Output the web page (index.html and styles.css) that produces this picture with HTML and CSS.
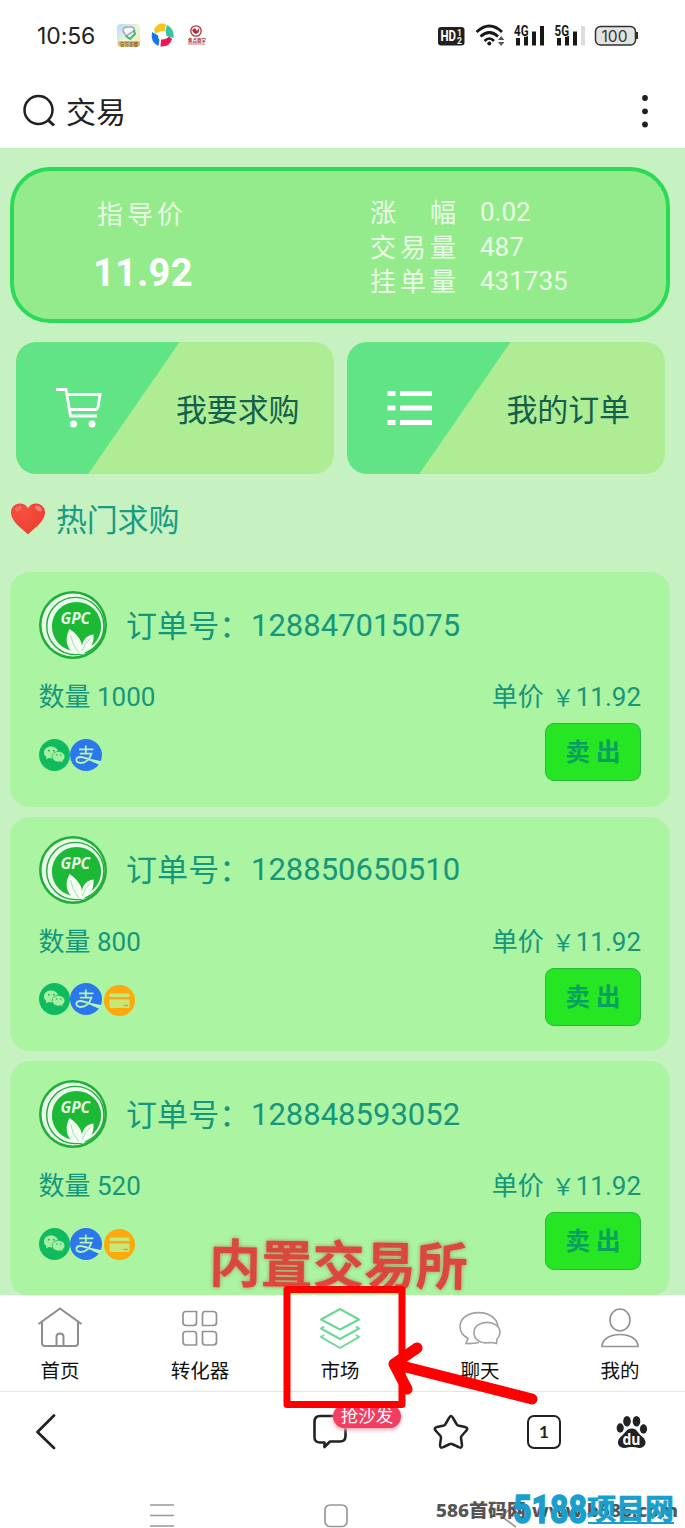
FILE: index.html
```html
<!DOCTYPE html>
<html lang="zh-CN">
<head>
<meta charset="utf-8">
<title>交易</title>
<link rel="stylesheet" href="styles.css">
</head>
<body>
<svg class="defs" width="0" height="0">
  <symbol id="gpc" viewBox="0 0 68 68">
    <circle cx="34" cy="34" r="34" fill="#1fae38"/>
    <circle cx="34" cy="34" r="31.500" fill="#e9fbe9"/>
    <circle cx="36.300" cy="35" r="28.600" fill="none" stroke="#1fae38" stroke-width="1.400"/>
    <circle cx="37.500" cy="35.500" r="24.600" fill="#1cb936"/>
    <text x="21.500" y="32.500" class="gpc-text" textLength="29.500" lengthAdjust="spacingAndGlyphs">GPC</text>
    <path d="M30.500 38C38 43 45 51 42.500 59C43 49 47 44.500 54.500 43.500C55 51 53 57 47 60L45 63H36C26 57 26 46 30.500 38Z" fill="#f2fff2"/>
    <path d="M31.500 44Q33 54 40 62M51.500 47Q46 52 43 60" stroke="#7fd389" stroke-width=".7" fill="none"/>
  </symbol>
  <symbol id="wechat" viewBox="0 0 31 32">
    <ellipse cx="15.500" cy="16" rx="15.500" ry="16" fill="#10ba5f"/>
    <path d="M12 7.500c-4 0-7 2.500-7 6 0 2 1 3.500 2.500 4.600l-.8 2.400 3-1.400c1 .3 1.700.3 2.600.3 4 0 7-2.600 7-5.900S16 7.500 12 7.500z" fill="#a8eea0"/>
    <path d="M19.500 12.400c-3.600 0-6.300 2.300-6.300 5.300s2.700 5.300 6.300 5.300c.8 0 1.500-.1 2.100-.3l2.500 1.300-.5-2.200c1.500-1 2.300-2.400 2.300-4.100 0-3-2.800-5.300-6.400-5.300z" fill="#a8eea0" stroke="#10ba5f" stroke-width=".8"/>
    <g fill="#10ba5f"><circle cx="9.800" cy="11.700" r=".9"/><circle cx="14.800" cy="11.700" r=".9"/><circle cx="17.600" cy="16" r=".8"/><circle cx="21.700" cy="16" r=".8"/></g>
  </symbol>
  <symbol id="alipay" viewBox="0 0 32 32">
    <circle cx="16" cy="16" r="16" fill="#2a77ee"/>
    <path d="M9 10.300H23.500M15.800 6.500V14.500M9.800 14.600H21.500Q18.500 24 10.500 24C5 24 5 18 10.500 18C15.500 18 21 22 30 24.500" fill="none" stroke="#b9f4b7" stroke-width="1.800"/>
    <path d="M19 19.500L31.700 22.300L30 26L23 23Z" fill="#b9f4b7"/>
  </symbol>
  <symbol id="bank" viewBox="0 0 31 31">
    <circle cx="15.500" cy="15.500" r="15.500" fill="#fba90d"/>
    <path d="M6.500 8.500h18q1 0 1 1v2.500h-20V9.500q0-1 1-1zM5.500 14.500h20v7.500q0 1-1 1h-18q-1 0-1-1z" fill="#c6e77a"/>
    <path d="M19.500 20.500h4.500" stroke="#e5a22b" stroke-width="1.500"/>
  </symbol>
</svg>
<div class="phone">
  <header class="status">
    <span class="clock">10:56</span>
    <svg class="app-icons" width="94" height="28" viewBox="0 0 94 28">
      <defs><linearGradient id="app" x2="1" y2="1"><stop stop-color="#a9dcfb"/><stop offset=".5" stop-color="#e7f8d6"/><stop offset="1" stop-color="#ffe8a2"/></linearGradient></defs>
      <rect x="1" y="2" width="23" height="22" rx="4" fill="url(#app)"/>
      <path d="M10 14l-3-5q0-4 4-4h5q3 1 2 4z" fill="#e8fff4" stroke="#c395ca" stroke-width="1.500"/>
      <path d="M10 14l4 3 5-5-1-4" fill="none" stroke="#29bd8e" stroke-width="2"/>
      <rect x="2" y="19" width="22" height="5.500" rx="2" fill="#dfb573"/>
      <text x="4" y="23.600" class="app-tiny brown">官方正版</text>
      <path d="M38 7Q43-1 50 2.500L48.500 9.500Q44 8 39.500 12Z" fill="#f5c51b"/>
      <path d="M51 3Q59 7 57.500 16L50.500 14Q50 10 49.500 9Z" fill="#32c5a6"/>
      <path d="M56 17Q54 25 44.500 24.500L45 17.500Q50 18 53 14.500Z" fill="#ef164e"/>
      <path d="M36 10L42 13.500Q42 17 43.500 18L42.500 24Q34 20 36 10Z" fill="#1677ec"/>
      <circle cx="80" cy="9" r="5.200" fill="none" stroke="#b32d36" stroke-width="1.300"/>
      <path d="M76 8l3-2 2 3 2-3q1 5-3 6-3-1-4-4z" fill="#b32d36"/>
      <text x="72" y="19.500" class="app-tiny red">焦点商学</text>
      <path d="M72 22h17" stroke="#d27579" stroke-width="1"/>
    </svg>
    <svg class="signals" width="202" height="24" viewBox="-2 0 202 24">
      <rect x="-1" y="3" width="26.500" height="18.500" rx="3" fill="#202020"/>
      <text x="1.500" y="17.200" class="hd" textLength="15.500" lengthAdjust="spacingAndGlyphs">HD</text>
      <text x="18" y="11.500" class="hd-sub">1</text><text x="18" y="19.500" class="hd-sub">2</text>
      <g fill="none" stroke="#181818" stroke-width="2.700"><path d="M37.500 8Q50.500-4 63 8M41.500 12.500Q50.500 4.500 59 12.500M45.500 17Q50.500 12 55 17"/></g>
      <circle cx="50.300" cy="19.500" r="2" fill="#181818"/>
      <path d="M59 16l3.200-4 3.200 4zM59 18l3.200 4 3.200-4z" fill="#555"/>
      <g fill="#181818"><path d="M77 14h4v7.500h-4zM85 12h4v9.500h-4zM93 7.500h4v14h-4zM101 2h4v19.500h-4zM118 14h4v7.500h-4zM126 12h4v9.500h-4zM134 7.500h4v14h-4z"/></g>
      <path d="M142 2h4v19.500h-4z" fill="#ddd"/>
      <text x="75" y="11.500" class="net" textLength="14.500" lengthAdjust="spacingAndGlyphs">4G</text>
      <text x="115.500" y="11.500" class="net" textLength="14.500" lengthAdjust="spacingAndGlyphs">5G</text>
      <rect x="156.500" y="2.500" width="40" height="18.500" rx="5" fill="#e3e3e3" stroke="#303030" stroke-width="1.500"/>
      <path d="M198 8v7" stroke="#303030" stroke-width="2"/>
      <text x="162.500" y="17.500" class="batt" textLength="26" lengthAdjust="spacingAndGlyphs">100</text>
    </svg>
  </header>
  <div class="topbar">
    <svg width="34" height="34" viewBox="0 0 34 34" fill="none" stroke="#202020"><circle cx="16.500" cy="16" r="14" stroke-width="2.500"/><path d="M26 26l6 5.500" stroke-width="3"/></svg>
    <h1>交易</h1>
    <svg class="more" width="8" height="34" viewBox="0 0 8 34" fill="#202020"><circle cx="4" cy="4" r="2.900"/><circle cx="4" cy="17.300" r="2.900"/><circle cx="4" cy="30.500" r="2.900"/></svg>
  </div>

  <main class="market">
    <section class="price">
      <div class="guide"><span class="guide-label">指导价</span><strong>11.92</strong></div>
      <dl class="stats">
        <dt>涨　幅</dt><dd>0.02</dd>
        <dt>交易量</dt><dd>487</dd>
        <dt>挂单量</dt><dd>431735</dd>
      </dl>
    </section>
    <nav class="actions">
      <a class="action">
        <svg width="48" height="42" viewBox="0 0 48 42"><path d="M1 2.500H11L15.500 29H42M12 7.500H45L43 20Q42.500 22.500 40 22.500H14.500" fill="none" stroke="#fff" stroke-width="2.800"/><circle cx="18.500" cy="37" r="3.500" fill="#fff"/><circle cx="37" cy="37" r="3.500" fill="#fff"/></svg>
        <span>我要求购</span>
      </a>
      <a class="action">
        <svg width="48" height="42" viewBox="0 0 48 42" fill="#fff"><path d="M1.500 4h8v5h-8zM14 4h32v5H14zM1.500 18.500h8v5h-8zM14 18.500h32v5H14zM1.500 33h8v5h-8zM14 33h32v5H14z"/></svg>
        <span>我的订单</span>
      </a>
    </nav>
    <h2 class="hot">
      <svg width="36" height="34" viewBox="0 0 36 34"><defs><radialGradient id="heart" cx=".35" cy=".3" r=".8"><stop stop-color="#f6503e"/><stop offset=".8" stop-color="#ef4132"/><stop offset="1" stop-color="#c9382d"/></radialGradient></defs><path d="M18 32.500C14 28 1 20 1 10.500C1 1 13-2 18 6C23-2 35 1 35 10.500C35 20 22 28 18 32.500Z" fill="url(#heart)"/><ellipse cx="28.500" cy="6.500" rx="3.800" ry="2.200" fill="#f28079" transform="rotate(35 28.500 6.500)"/><ellipse cx="8.500" cy="6.500" rx="3.800" ry="2" fill="#f06a60" transform="rotate(-35 8.500 6.500)"/></svg>
      <span>热门求购</span>
    </h2>
    <div class="orders">
      <article class="order">
        <div class="order-head"><svg class="logo"><use href="#gpc"/></svg><span class="order-label">订单号：</span><span>128847015075</span></div>
        <div class="order-info"><span>数量 1000</span><span class="unit">单价<i>￥</i>11.92</span></div>
        <div class="order-foot"><div class="pays"><svg class="pay-wechat"><use href="#wechat"/></svg><svg class="pay-ali"><use href="#alipay"/></svg></div><button class="sell">卖 出</button></div>
      </article>
      <article class="order">
        <div class="order-head"><svg class="logo"><use href="#gpc"/></svg><span class="order-label">订单号：</span><span>128850650510</span></div>
        <div class="order-info"><span>数量 800</span><span class="unit">单价<i>￥</i>11.92</span></div>
        <div class="order-foot"><div class="pays"><svg class="pay-wechat"><use href="#wechat"/></svg><svg class="pay-ali"><use href="#alipay"/></svg><svg class="pay-bank"><use href="#bank"/></svg></div><button class="sell">卖 出</button></div>
      </article>
      <article class="order">
        <div class="order-head"><svg class="logo"><use href="#gpc"/></svg><span class="order-label">订单号：</span><span>128848593052</span></div>
        <div class="order-info"><span>数量 520</span><span class="unit">单价<i>￥</i>11.92</span></div>
        <div class="order-foot"><div class="pays"><svg class="pay-wechat"><use href="#wechat"/></svg><svg class="pay-ali"><use href="#alipay"/></svg><svg class="pay-bank"><use href="#bank"/></svg></div><button class="sell">卖 出</button></div>
      </article>
    </div>
  </main>

  <nav class="tabs">
    <a><svg width="46" height="44" viewBox="0 0 46 44" fill="none" stroke="#8d8d8d" stroke-width="2"><path d="M1.500 18L23 2.500L44.500 18M5 16V37Q5 40 8 40H38Q41 40 41 37V16M19.500 40V31Q19.500 27.500 23 27.500Q26.500 27.500 26.500 31V40"/></svg><span>首页</span></a>
    <a><svg width="46" height="44" viewBox="0 0 46 44" fill="none" stroke="#929292" stroke-width="1.700"><path d="M9 5.500H19.500V16.500Q19.500 19.500 16.500 19.500H9Q6 19.500 6 16.500V8.500Q6 5.500 9 5.500ZM28 5.500H36Q39.500 5.500 39.500 8.500V16.500Q39.500 19.500 36 19.500H25.500V8.500Q25.500 5.500 28 5.500ZM9 25.500H16.500Q19.500 25.500 19.500 28.500V39H9Q6 39 6 36V28.500Q6 25.500 9 25.500ZM25.500 25.500H36Q39.500 25.500 39.500 28.500V36Q39.500 39 36 39H28Q25.500 39 25.500 36Z"/></svg><span>转化器</span></a>
    <a><svg width="46" height="44" viewBox="0 0 46 44" fill="none" stroke="#6bd995" stroke-width="2" stroke-linejoin="round"><path d="M23 3L42 13.500L23 23.500L4 13.500ZM7 20.500L4 22.500L23 33L42 22.500L39 20.500M7 29L4 31L23 42L42 31L39 29"/></svg><span>市场</span></a>
    <a><svg width="46" height="44" viewBox="0 0 46 44" fill="none" stroke="#a0a0a0" stroke-width="1.600"><path d="M22 36.500Q15 38 9 37.500L11 32.500Q3 28 3 20.500C3 2.500 39 1.500 41 20.500"/><path d="M40 33Q43 30 43 26.500C43 13 17 13 17 26.500C17 34 24 38 32 36.500Q36 36.500 39.500 37.500Z"/></svg><span>聊天</span></a>
    <a><svg width="46" height="44" viewBox="0 0 46 44" fill="none" stroke="#929292" stroke-width="1.600"><ellipse cx="23" cy="14" rx="10" ry="11"/><path d="M5 40.500C5 24.500 41 24.500 41 40.500Z"/></svg><span>我的</span></a>
  </nav>

  <nav class="browser">
    <svg class="b-back" viewBox="0 0 20 36" fill="none" stroke="#222" stroke-width="2.700" stroke-linecap="round" stroke-linejoin="round"><path d="M18 1.500L1.500 18L18 34"/></svg>
    <div class="comment">
      <svg width="34" height="36" viewBox="0 0 34 36" fill="none" stroke="#222" stroke-width="2.600" stroke-linejoin="round"><path d="M7 2H27Q32.500 2 32.500 8V22Q32.500 27.500 27 27.500H17L11.500 33V28.500H7Q1.500 28.500 1.500 23V8Q1.500 2 7 2Z"/></svg>
      <span class="badge">抢沙发</span>
    </div>
    <svg class="b-star" viewBox="0 0 36 36" fill="none" stroke="#222" stroke-width="2.500" stroke-linejoin="round"><path d="M16 4Q18 0 20 4L23.500 10Q24 11 25 11.500L32 13Q36 14 33 17L28.500 22Q28 23 28 24L29 31Q29 35 25.500 33L19 30Q18 29.500 17 30L10.500 33Q7 35 7 31L8 24Q8 23 7.500 22L3 17Q0 14 4 13L11 11.500Q12 11 12.500 10Z"/></svg>
    <span class="pages">1</span>
    <svg class="b-du" viewBox="0 0 32 34" fill="#222"><ellipse cx="4.200" cy="13" rx="3.600" ry="4.700"/><ellipse cx="11" cy="6.200" rx="3.800" ry="5.200"/><ellipse cx="20.500" cy="6.200" rx="3.800" ry="5.200"/><ellipse cx="27.500" cy="14" rx="3.600" ry="4.700"/><path d="M16 13.500C21 13.500 22 18.500 26 21.500C32 26 30 33 23 33Q16 31 9 33C1 33 0 26 5 21.500C9 18.500 10 13.500 16 13.500Z"/><text x="6.500" y="29.500" class="du" textLength="18" lengthAdjust="spacingAndGlyphs">du</text></svg>
  </nav>

  <nav class="system">
    <svg width="24" height="26" viewBox="0 0 24 26"><path d="M0 2h24M0 12.500h24M0 23h24" stroke="#999" stroke-width="1.700"/></svg>
    <svg width="24" height="26" viewBox="0 0 24 26"><rect x="1" y="2" width="22" height="21.500" rx="5" fill="none" stroke="#999" stroke-width="1.700"/></svg>
    <svg width="24" height="26" viewBox="0 0 24 26"><path d="M18 2L3 13L18 24" fill="none" stroke="#999" stroke-width="1.700"/></svg>
  </nav>

  <div class="caption">内置交易所</div>
  <svg class="pointer" width="260" height="130" viewBox="0 0 260 130" fill="none" stroke="#fe0000">
    <rect x="7" y="6.500" width="115" height="115" stroke-width="7" stroke-linejoin="round"/>
    <path d="M252 116L114 81L137 65M114 81L127 106" stroke-width="11" stroke-linecap="round" stroke-linejoin="round"/>
  </svg>
  <svg class="watermark" width="250" height="38" viewBox="0 0 250 38">
    <text x="4" y="27" class="wm-gray" textLength="90" lengthAdjust="spacingAndGlyphs">586首码网</text>
    <text x="100" y="27" class="wm-gray" textLength="146" lengthAdjust="spacingAndGlyphs">www.b586.com</text>
    <text x="81" y="33" class="wm-blue wm-num" textLength="74" lengthAdjust="spacingAndGlyphs">5188</text>
    <text x="155" y="30" class="wm-blue wm-cn" textLength="87" lengthAdjust="spacingAndGlyphs">项目网</text>
    <path d="M156 33H242" stroke="#199fcc" stroke-width="2"/>
  </svg>
</div>
</body>
</html>
```
FILE: styles.css
```css
* { box-sizing: border-box; }
body { margin: 0; background: #fff; font-family: Roboto, "Noto Sans CJK SC", sans-serif; }
svg { display: block; flex: none; }
.defs { position: absolute; }
.phone { position: relative; width: 685px; height: 1528px; overflow: hidden; display: flex; flex-direction: column; }
h1, h2, dl, dd { margin: 0; font-weight: 400; }

.status { height: 72px; padding: 0 46px 0 37px; display: flex; align-items: center; }
.clock { font: 400 23px/30px Inter, sans-serif; color: #222; width: 79px; letter-spacing: -.1px; }
.signals { margin-left: auto; }
.app-tiny { font: 700 4.500px "Noto Sans CJK SC", sans-serif; }
.brown { fill: #8a6224; }
.red { fill: #a31f2a; }
.hd { font: 700 14px Roboto, sans-serif; fill: #fff; }
.hd-sub { font: 700 8.500px Roboto, sans-serif; fill: #fff; }
.net { font: 700 14px Roboto, sans-serif; fill: #181818; stroke: #fff; stroke-width: 1.5; paint-order: stroke; }
.batt { font: 400 15.500px Inter, sans-serif; fill: #333; }

.topbar { height: 76px; padding: 2px 36px 0 22px; display: flex; align-items: center; }
.topbar h1 { font-size: 30px; line-height: 40px; margin-left: 10px; padding-top: 4px; color: #222; }
.more { margin-left: auto; }

.market { height: 1147px; padding: 19px 15px 0 10px; overflow: hidden; background: #c6f1c1; flex: none; }
.price { height: 156px; border: 4px solid #2bda56; border-radius: 40px; background: #94eb8c; display: flex; color: #f4fff0; }
.guide { width: 356px; padding: 28px 0 0 79px; display: flex; flex-direction: column; }
.guide-label { font-size: 26px; letter-spacing: 4px; line-height: 32px; padding-left: 4px; opacity: .88; }
.guide strong { font-size: 38px; line-height: 44px; margin-top: 20px; letter-spacing: .3px; color: #fff; }
.stats { padding-top: 24px; display: grid; grid-template-columns: 110px auto; grid-auto-rows: 34.500px; height: 110px; font-size: 26px; line-height: 34px; opacity: .9; }
.stats dt { letter-spacing: 4px; white-space: nowrap; padding-top: 1px; }

.actions { display: flex; gap: 12.500px; margin: 19px 0 0 6px; }
.action { width: 318px; height: 132px; border-radius: 20px; background: linear-gradient(124.700deg, #60e486 0 134px, #aeed93 135px); display: flex; align-items: center; padding-left: 39px; color: #14604c; }
.action span { font-size: 31px; line-height: 40px; margin-left: 73px; padding-top: 5px; letter-spacing: -.15px; }
.hot { display: flex; align-items: center; height: 40px; margin: 25px 0 0 0; gap: 10px; font-size: 31px; line-height: 40px; color: #1a9c83; }
.hot span { letter-spacing: -.2px; padding-top: 3px; }

.orders { margin-top: 33px; display: flex; flex-direction: column; gap: 10px; }
.order { height: 234.700px; background: #aaf4a2; border-radius: 20px; padding: 19px 29px 0 28.500px; color: #16967a; font-size: 26px; }
.order-head { display: flex; align-items: center; height: 68px; font-size: 31px; line-height: 40px; }
.order-label { width: 125px; margin-left: 19.500px; padding-top: 3px; letter-spacing: .1px; white-space: nowrap; }
.order-head .order-label + span { padding-top: 1px; }
.logo { width: 68px; height: 68px; }
.gpc-text { font: italic 700 15.500px "Open Sans", sans-serif; fill: #e9fbe9; }
.order-info { display: flex; justify-content: space-between; height: 40px; margin-top: 18px; line-height: 41px; }
.unit i { font-style: normal; font-size: 23px; display: inline-block; width: 24px; margin: 0 0 0 8px; }
.order-foot { display: flex; justify-content: space-between; margin-top: 6px; }
.pays { display: flex; padding-top: 15.500px; }
.pay-wechat { width: 31px; height: 32px; }
.pay-ali { width: 32px; height: 32px; }
.pay-bank { width: 31px; height: 31px; margin: 1.500px 0 0 2px; }
.sell { width: 96px; height: 58px; border: 1px solid #27b83c; border-radius: 9px; background: #26e522; color: #08a060; font: 700 24.500px/40px Roboto, "Noto Sans CJK SC", sans-serif; padding: 2px 0 0; }

.tabs { height: 97px; border-bottom: 1px solid #e5e5e5; padding: 11px 15px 0; display: flex; flex: none; justify-content: space-between; background: #fff; }
.tabs a { display: flex; flex-direction: column; align-items: center; width: 90px; color: #111; }
.tabs a:last-child { margin-right: 5px; }
.tabs span { font-size: 19.500px; line-height: 28px; margin-top: 7.500px; white-space: nowrap; }

.browser { height: 80px; display: flex; align-items: center; padding-left: 36px; flex: none; }
.b-back { width: 20px; height: 36px; }
.comment { position: relative; margin-left: 257px; }
.badge { position: absolute; left: 20px; top: -9px; width: 68px; height: 23px; border-radius: 12px; background: #f33e61; color: #fff; font-size: 17.500px; line-height: 23px; text-align: center; box-shadow: 0 2px 4px #f9a7b8; }
.b-star { width: 36px; height: 36px; margin-left: 85.500px; }
.pages { margin-left: 58.500px; width: 34px; height: 34px; border: 2.500px solid #222; border-radius: 7px; text-align: center; font: 700 17px/29px Lato, sans-serif; color: #222; }
.b-du { width: 32px; height: 34px; margin-left: 55px; }
.du { font: 700 16px "Open Sans", sans-serif; fill: #fff; }
.system { height: 56px; padding: 31px 0 0 150px; display: flex; gap: 150px; flex: none; }

.caption { position: absolute; left: 209px; top: 1232px; font-size: 52px; line-height: 70px; font-weight: 700; letter-spacing: -.3px; color: #db473d; transform: rotate(.8deg); text-shadow: 0 0 4px #b08058; white-space: nowrap; }
.pointer { position: absolute; left: 280px; top: 1283px; }
.watermark { position: absolute; left: 432px; top: 1490px; }
.wm-gray { font: 800 18px "Noto Sans", "Noto Sans CJK SC", sans-serif; fill: #555; }
.wm-blue { fill: #199fcc; stroke: #199fcc; stroke-width: .7; }
.wm-num { font: 700 39px Roboto, sans-serif; stroke-width: 1.5; }
.wm-cn { font: 700 29px "Noto Sans CJK SC", sans-serif; }
```
